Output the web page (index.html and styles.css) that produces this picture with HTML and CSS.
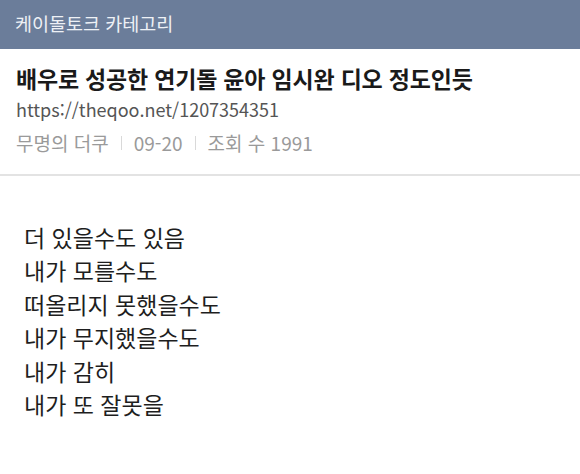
FILE: index.html
```html
<!DOCTYPE html>
<html lang="ko">
<head>
<meta charset="utf-8">
<link rel="stylesheet" href="styles.css">
</head>
<body>
<div class="page">
  <header class="topbar">케이돌토크 카테고리</header>
  <section class="post-head">
    <h1 class="title">배우로 성공한 연기돌 윤아 임시완 디오 정도인듯</h1>
    <div class="url">https://theqoo.net/1207354351</div>
    <div class="meta">
      <span>무명의 더쿠</span>
      <span class="sep"></span>
      <span>09-20</span>
      <span class="sep"></span>
      <span>조회 수 1991</span>
    </div>
  </section>
  <article class="post-body">
    <p>더 있을수도 있음</p>
    <p>내가 모를수도</p>
    <p>떠올리지 못했을수도</p>
    <p>내가 무지했을수도</p>
    <p>내가 감히</p>
    <p>내가 또 잘못을</p>
  </article>
</div>
</body>
</html>
```

FILE: styles.css
```css
html, body {
  margin: 0;
  padding: 0;
  background: #ffffff;
}
body {
  font-family: "Noto Sans CJK KR", "Noto Sans", sans-serif;
  width: 580px;
  height: 474px;
  overflow: hidden;
}
.topbar {
  height: 49px;
  background: #6b7d9a;
  color: #eef1f6;
  font-size: 18.5px;
  line-height: 46px;
  padding-left: 15px;
}
.post-head {
  padding: 12px 16px 0;
  height: 113px;
  border-bottom: 2px solid #e3e3e3;
}
.title {
  margin: 0;
  font-size: 23px;
  font-weight: 700;
  color: #1a1a1a;
  line-height: 34px;
  letter-spacing: -0.2px;
}
.url {
  font-size: 18px;
  color: #555;
  line-height: 30px;
  margin-top: -1px;
}
.meta {
  display: flex;
  align-items: center;
  font-size: 19px;
  color: #9a9a9a;
  line-height: 34px;
  margin-top: 2px;
}
.sep {
  width: 1px;
  height: 14px;
  background: #d9d9d9;
  margin: 0 12px;
}
.post-body {
  padding: 45px 24px 0;
}
.post-body p {
  margin: 0;
  font-size: 23px;
  color: #1e1e1e;
  line-height: 33.4px;
}
```
